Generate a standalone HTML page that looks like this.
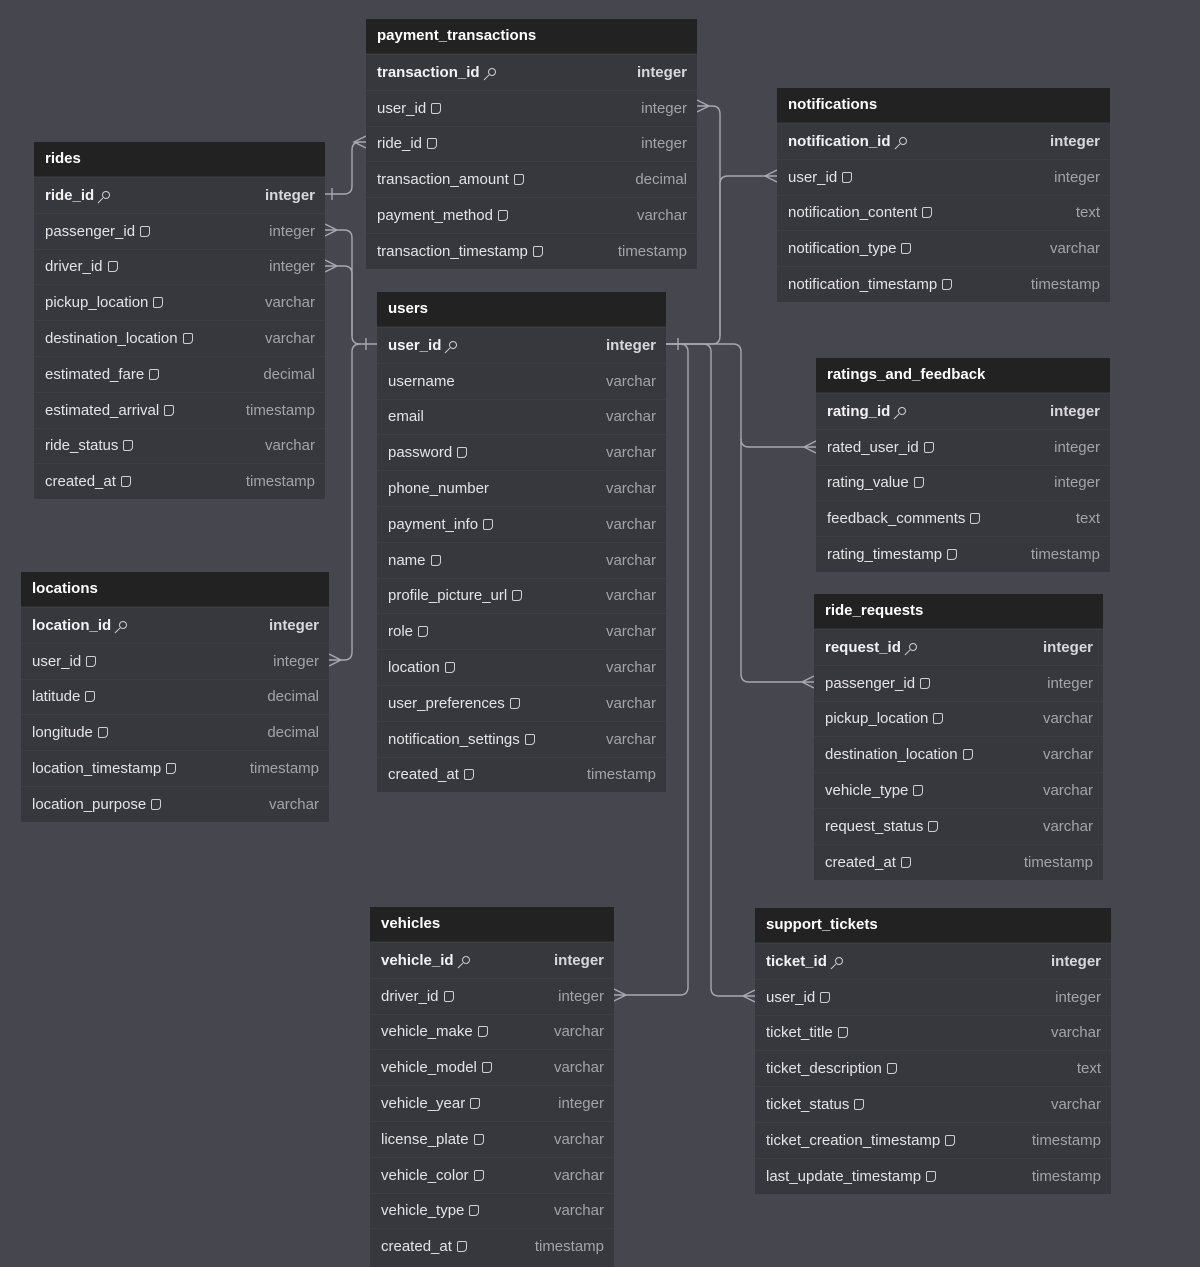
<!DOCTYPE html>
<html><head><meta charset="utf-8"><style>
*{margin:0;padding:0;box-sizing:border-box}
body{width:1200px;height:1266px;background:#45464e;position:relative;overflow:hidden;font-family:"Liberation Sans",sans-serif;font-size:15px;color:#e4e4e6}
.t{position:absolute;background:#37373e}
.h{background:#222222;height:35px;line-height:33px;padding-left:11px;font-weight:bold;color:#fff;border-bottom:1px solid #2d2d33}
.r{height:35.8px;display:flex;align-items:center;justify-content:space-between;padding:0 10px 0 11px;border-top:1px solid #3d3d45}
.r:first-of-type{border-top:none}
.r b{font-weight:normal;color:#a3a3a8}
.r.k span,.r.k b{font-weight:bold;color:#d8d8dc}
.r.k span{color:#f2f2f4}
.n{display:inline-block;width:10px;height:11px;border:1.3px solid #cfcfd3;border-radius:2px 2px 4px 2px;margin-left:5px;vertical-align:-1px}
.ky{display:inline-block;width:8px;height:8px;border:1.3px solid #cfcfd3;border-radius:50%;margin-left:8px;position:relative;vertical-align:1px}
.ky:after{content:"";position:absolute;width:7px;height:1.3px;background:#cfcfd3;left:-6px;top:8px;transform:rotate(-45deg)}
svg{position:absolute;left:0;top:0}
</style></head><body>
<svg width="1200" height="1266" fill="none" stroke="#a8a8b0" stroke-width="1.4">
<path d="M325,194 H344 Q352,194 352,186 V150 Q352,142 360,142 H366"/>
<path d="M325,230 H344 Q352,230 352,238 V336 Q352,344 360,344 H377"/>
<path d="M325,266 H344 Q352,266 352,274 V336"/>
<path d="M329,660 H344 Q352,660 352,652 V352 Q352,344 360,344"/>
<path d="M666,344 H712 Q720,344 720,336 V114 Q720,106 712,106 H697"/>
<path d="M720,336 V184 Q720,176 728,176 H777"/>
<path d="M666,344 H733 Q741,344 741,352 V439 Q741,447 749,447 H816"/>
<path d="M741,439 V674 Q741,682 749,682 H814"/>
<path d="M666,344 H680 Q688,344 688,352 V987 Q688,995 680,995 H614"/>
<path d="M666,344 H703 Q711,344 711,352 V988 Q711,996 719,996 H755"/>
<path d="M332,188 V200 M366,338 V350 M678,338 V350 M366,136 L354,142 L366,148 M697,100 L709,106 L697,112 M777,170 L765,176 L777,182 M816,441 L804,447 L816,453 M814,676 L802,682 L814,688 M614,989 L626,995 L614,1001 M755,990 L743,996 L755,1002 M325,224 L337,230 L325,236 M325,260 L337,266 L325,272 M329,654 L341,660 L329,666"/>
</svg>

<div class="t" style="left:366px;top:19px;width:331px"><div class="h">payment_transactions</div>
<div class="r k"><span>transaction_id<i class="ky"></i></span><b>integer</b></div>
<div class="r"><span>user_id<i class="n"></i></span><b>integer</b></div>
<div class="r"><span>ride_id<i class="n"></i></span><b>integer</b></div>
<div class="r"><span>transaction_amount<i class="n"></i></span><b>decimal</b></div>
<div class="r"><span>payment_method<i class="n"></i></span><b>varchar</b></div>
<div class="r"><span>transaction_timestamp<i class="n"></i></span><b>timestamp</b></div>
</div>

<div class="t" style="left:34px;top:142px;width:291px"><div class="h">rides</div>
<div class="r k"><span>ride_id<i class="ky"></i></span><b>integer</b></div>
<div class="r"><span>passenger_id<i class="n"></i></span><b>integer</b></div>
<div class="r"><span>driver_id<i class="n"></i></span><b>integer</b></div>
<div class="r"><span>pickup_location<i class="n"></i></span><b>varchar</b></div>
<div class="r"><span>destination_location<i class="n"></i></span><b>varchar</b></div>
<div class="r"><span>estimated_fare<i class="n"></i></span><b>decimal</b></div>
<div class="r"><span>estimated_arrival<i class="n"></i></span><b>timestamp</b></div>
<div class="r"><span>ride_status<i class="n"></i></span><b>varchar</b></div>
<div class="r"><span>created_at<i class="n"></i></span><b>timestamp</b></div>
</div>

<div class="t" style="left:777px;top:88px;width:333px"><div class="h">notifications</div>
<div class="r k"><span>notification_id<i class="ky"></i></span><b>integer</b></div>
<div class="r"><span>user_id<i class="n"></i></span><b>integer</b></div>
<div class="r"><span>notification_content<i class="n"></i></span><b>text</b></div>
<div class="r"><span>notification_type<i class="n"></i></span><b>varchar</b></div>
<div class="r"><span>notification_timestamp<i class="n"></i></span><b>timestamp</b></div>
</div>

<div class="t" style="left:377px;top:292px;width:289px"><div class="h">users</div>
<div class="r k"><span>user_id<i class="ky"></i></span><b>integer</b></div>
<div class="r"><span>username</span><b>varchar</b></div>
<div class="r"><span>email</span><b>varchar</b></div>
<div class="r"><span>password<i class="n"></i></span><b>varchar</b></div>
<div class="r"><span>phone_number</span><b>varchar</b></div>
<div class="r"><span>payment_info<i class="n"></i></span><b>varchar</b></div>
<div class="r"><span>name<i class="n"></i></span><b>varchar</b></div>
<div class="r"><span>profile_picture_url<i class="n"></i></span><b>varchar</b></div>
<div class="r"><span>role<i class="n"></i></span><b>varchar</b></div>
<div class="r"><span>location<i class="n"></i></span><b>varchar</b></div>
<div class="r"><span>user_preferences<i class="n"></i></span><b>varchar</b></div>
<div class="r"><span>notification_settings<i class="n"></i></span><b>varchar</b></div>
<div class="r"><span>created_at<i class="n"></i></span><b>timestamp</b></div>
</div>

<div class="t" style="left:816px;top:358px;width:294px"><div class="h">ratings_and_feedback</div>
<div class="r k"><span>rating_id<i class="ky"></i></span><b>integer</b></div>
<div class="r"><span>rated_user_id<i class="n"></i></span><b>integer</b></div>
<div class="r"><span>rating_value<i class="n"></i></span><b>integer</b></div>
<div class="r"><span>feedback_comments<i class="n"></i></span><b>text</b></div>
<div class="r"><span>rating_timestamp<i class="n"></i></span><b>timestamp</b></div>
</div>

<div class="t" style="left:21px;top:572px;width:308px"><div class="h">locations</div>
<div class="r k"><span>location_id<i class="ky"></i></span><b>integer</b></div>
<div class="r"><span>user_id<i class="n"></i></span><b>integer</b></div>
<div class="r"><span>latitude<i class="n"></i></span><b>decimal</b></div>
<div class="r"><span>longitude<i class="n"></i></span><b>decimal</b></div>
<div class="r"><span>location_timestamp<i class="n"></i></span><b>timestamp</b></div>
<div class="r"><span>location_purpose<i class="n"></i></span><b>varchar</b></div>
</div>

<div class="t" style="left:814px;top:594px;width:289px"><div class="h">ride_requests</div>
<div class="r k"><span>request_id<i class="ky"></i></span><b>integer</b></div>
<div class="r"><span>passenger_id<i class="n"></i></span><b>integer</b></div>
<div class="r"><span>pickup_location<i class="n"></i></span><b>varchar</b></div>
<div class="r"><span>destination_location<i class="n"></i></span><b>varchar</b></div>
<div class="r"><span>vehicle_type<i class="n"></i></span><b>varchar</b></div>
<div class="r"><span>request_status<i class="n"></i></span><b>varchar</b></div>
<div class="r"><span>created_at<i class="n"></i></span><b>timestamp</b></div>
</div>

<div class="t" style="left:370px;top:907px;width:244px;height:360px"><div class="h">vehicles</div>
<div class="r k"><span>vehicle_id<i class="ky"></i></span><b>integer</b></div>
<div class="r"><span>driver_id<i class="n"></i></span><b>integer</b></div>
<div class="r"><span>vehicle_make<i class="n"></i></span><b>varchar</b></div>
<div class="r"><span>vehicle_model<i class="n"></i></span><b>varchar</b></div>
<div class="r"><span>vehicle_year<i class="n"></i></span><b>integer</b></div>
<div class="r"><span>license_plate<i class="n"></i></span><b>varchar</b></div>
<div class="r"><span>vehicle_color<i class="n"></i></span><b>varchar</b></div>
<div class="r"><span>vehicle_type<i class="n"></i></span><b>varchar</b></div>
<div class="r"><span>created_at<i class="n"></i></span><b>timestamp</b></div>
</div>

<div class="t" style="left:755px;top:908px;width:356px"><div class="h">support_tickets</div>
<div class="r k"><span>ticket_id<i class="ky"></i></span><b>integer</b></div>
<div class="r"><span>user_id<i class="n"></i></span><b>integer</b></div>
<div class="r"><span>ticket_title<i class="n"></i></span><b>varchar</b></div>
<div class="r"><span>ticket_description<i class="n"></i></span><b>text</b></div>
<div class="r"><span>ticket_status<i class="n"></i></span><b>varchar</b></div>
<div class="r"><span>ticket_creation_timestamp<i class="n"></i></span><b>timestamp</b></div>
<div class="r"><span>last_update_timestamp<i class="n"></i></span><b>timestamp</b></div>
</div>
</body></html>
